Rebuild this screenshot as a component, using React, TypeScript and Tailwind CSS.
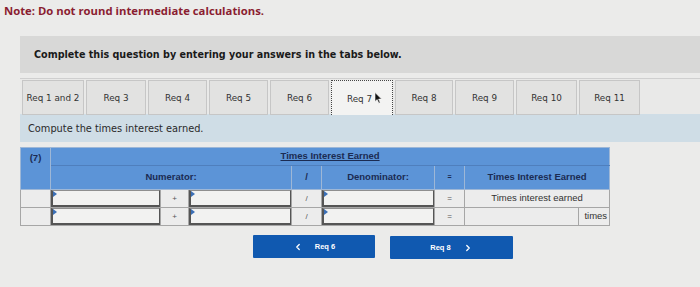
import { ChevronLeft, ChevronRight } from "lucide-react";

const tabs = [
  { label: "Req 1 and 2", w: "w-[62px]" },
  { label: "Req 3", w: "w-[60px]" },
  { label: "Req 4", w: "w-[59px]" },
  { label: "Req 5", w: "w-[59px]" },
  { label: "Req 6", w: "w-[59px]" },
  { label: "Req 7", w: "w-[62px]", active: true },
  { label: "Req 8", w: "w-[58px]" },
  { label: "Req 9", w: "w-[59px]" },
  { label: "Req 10", w: "w-[61px]" },
  { label: "Req 11", w: "w-[61px]" },
];

const Cursor = () => (
  <svg width="9" height="12" viewBox="0 0 9 12" className="ml-[2px] -mt-[3px]">
    <path d="M1 0.5 L1 9.5 L3.2 7.6 L4.8 11.2 L6.2 10.6 L4.6 7.1 L7.6 7.1 Z" fill="#111" stroke="#fff" strokeWidth="0.6" />
  </svg>
);

const InputCell = () => (
  <td className="p-0 border border-[#a6a6a6] bg-[#ececec] align-top">
    <div className="relative h-[17px] border border-[#555] border-l-2 border-b-2 border-t-[#8f8f8f] bg-[#f2f2f1]">
      <span className="absolute left-0 top-0 w-0 h-0 border-t-[3px] border-b-[3px] border-l-[4px] border-t-transparent border-b-transparent border-l-[#3b6fb6]" />
    </div>
  </td>
);

const Sym = ({ children }: { children: string }) => (
  <td className="border border-[#a6a6a6] bg-[#ececec] text-center text-[8px] text-[#555]">
    {children}
  </td>
);

export default function App() {
  return (
    <div className="w-[700px] h-[287px] overflow-hidden bg-[#ebebea] font-['Liberation_Sans',sans-serif]">
      <p className="pt-[3px] pl-[4px] text-[11.3px] leading-[15px] font-bold text-[#8a1d31] font-['Open_Sans',sans-serif]">
        Note: Do not round intermediate calculations.
      </p>

      <div className="mt-[18px] ml-[20px] h-[37px] bg-[#d8d8d7] flex items-center pl-[14px] pt-[2px]">
        <span className="text-[9.6px] font-bold text-[#1a1a1a] font-['DejaVu_Sans',sans-serif]">
          Complete this question by entering your answers in the tabs below.
        </span>
      </div>

      <div className="mt-[5px] ml-[20px] h-[36px] border-t border-[#cfcfcf] bg-[#e9e9e8] flex gap-[2px] pl-[2px] pt-[1px]">
        {tabs.map((t) =>
          t.active ? (
            <div
              key={t.label}
              className={`${t.w} h-[35px] bg-[#f3f3f2] border border-dotted border-[#444] border-b-0 flex items-center justify-center pt-[3px] text-[8.8px] text-[#333] font-['DejaVu_Sans',sans-serif]`}
            >
              <span className="ml-[6px]">{t.label}</span>
              <Cursor />
            </div>
          ) : (
            <div
              key={t.label}
              className={`${t.w} h-[35px] bg-[#e2e2e1] border border-[#c6c6c6] flex items-center justify-center pt-[3px] text-[8.8px] text-[#333] font-['DejaVu_Sans',sans-serif]`}
            >
              {t.label}
            </div>
          )
        )}
      </div>

      <div className="ml-[20px] h-[28px] bg-[#cfdde6] flex items-center pl-[8px] pt-[3px]">
        <span className="text-[9.8px] text-[#2a2a2a] font-['DejaVu_Sans',sans-serif]">
          Compute the times interest earned.
        </span>
      </div>

      <table className="mt-[5px] ml-[20px] w-[589px] table-fixed border-collapse text-[9.5px] text-[#1b2b52]">
        <colgroup>
          <col className="w-[30px]" />
          <col className="w-[110px]" />
          <col className="w-[28px]" />
          <col className="w-[103px]" />
          <col className="w-[30px]" />
          <col className="w-[113px]" />
          <col className="w-[30px]" />
          <col className="w-[114px]" />
          <col className="w-[31px]" />
        </colgroup>
        <tbody>
          <tr className="h-[18px] bg-[#5c94d7]">
            <td rowSpan={2} className="border border-[#9eb7d6] align-top text-center font-bold pt-[3px]">
              (7)
            </td>
            <td colSpan={8} className="border border-[#9eb7d6] border-b-[#4f7fbd] text-center font-bold underline">
              Times Interest Earned
            </td>
          </tr>
          <tr className="h-[24px] bg-[#5c94d7] font-bold">
            <td colSpan={3} className="border border-[#9eb7d6] text-center">
              Numerator:
            </td>
            <td className="border border-[#9eb7d6] text-center">/</td>
            <td className="border border-[#9eb7d6] text-center">Denominator:</td>
            <td className="border border-[#9eb7d6] text-center text-[7px]">=</td>
            <td colSpan={2} className="border border-[#9eb7d6] text-center">
              Times Interest Earned
            </td>
          </tr>
          <tr className="h-[17px]">
            <td className="border border-[#a6a6a6] bg-[#ececec]" />
            <InputCell />
            <Sym>+</Sym>
            <InputCell />
            <Sym>/</Sym>
            <InputCell />
            <Sym>=</Sym>
            <td colSpan={2} className="border border-[#a6a6a6] bg-[#ececec] text-center text-[#333]">
              Times interest earned
            </td>
          </tr>
          <tr className="h-[17px]">
            <td className="border border-[#a6a6a6] bg-[#ececec]" />
            <InputCell />
            <Sym>+</Sym>
            <InputCell />
            <Sym>/</Sym>
            <InputCell />
            <Sym>=</Sym>
            <td className="border border-[#a6a6a6] bg-[#ececec]" />
            <td className="border border-[#a6a6a6] bg-[#ececec] text-right pr-[2px] text-[#333]">times</td>
          </tr>
        </tbody>
      </table>

      <div className="mt-[9px] ml-[253px] flex gap-[15px]">
        <button className="w-[122px] h-[23px] bg-[#1059b0] rounded-[1px] flex items-center justify-center gap-[12px] text-white text-[7.5px] font-bold">
          <ChevronLeft size={10} strokeWidth={3} />
          <span>Req 6</span>
        </button>
        <button className="w-[123px] h-[23px] mt-[1px] bg-[#1059b0] rounded-[1px] flex items-center justify-center gap-[12px] text-white text-[7.5px] font-bold">
          <span>Req 8</span>
          <ChevronRight size={10} strokeWidth={3} />
        </button>
      </div>
    </div>
  );
}
